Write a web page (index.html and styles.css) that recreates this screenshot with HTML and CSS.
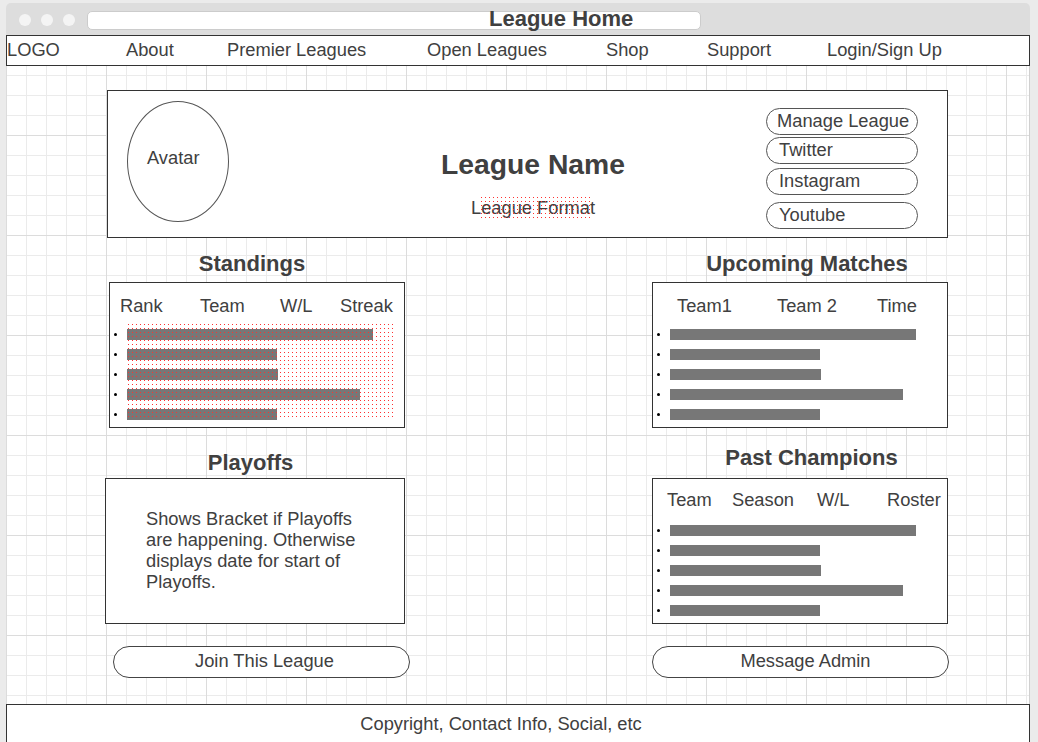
FILE: index.html
```html
<!DOCTYPE html>
<html lang="en">
<head>
<meta charset="utf-8">
<title>League Home</title>
<link rel="stylesheet" href="styles.css">
</head>
<body>
<div class="window">
  <div class="titlebar">
    <div class="dots"><span class="dot"></span><span class="dot"></span><span class="dot"></span></div>
    <div class="addr"></div>
    <div class="win-title">League Home</div>
  </div>
  <nav class="nav">
    <span class="nav-item w-logo">LOGO</span>
    <span class="nav-item w-about">About</span>
    <span class="nav-item w-premier">Premier Leagues</span>
    <span class="nav-item w-open">Open Leagues</span>
    <span class="nav-item w-shop">Shop</span>
    <span class="nav-item w-support">Support</span>
    <span class="nav-item">Login/Sign Up</span>
  </nav>
  <main class="canvas">
    <section class="hero">
      <div class="avatar">Avatar</div>
      <div class="hero-center">
        <div class="league-name">League Name</div>
        <div class="league-format">League Format</div>
      </div>
      <div class="hero-links">
        <div class="pill pill-first">Manage League</div>
        <div class="pill pill-2">Twitter</div>
        <div class="pill pill-3">Instagram</div>
        <div class="pill pill-4">Youtube</div>
      </div>
    </section>
    <div class="columns">
      <div class="col col-left">
        <h2 class="sec-title t-standings">Standings</h2>
        <div class="box box-standings">
          <div class="thead th-standings">
            <span class="c80">Rank</span><span class="c80">Team</span><span class="c60">W/L</span><span>Streak</span>
          </div>
          <ul class="rows rows-top">
            <li class="row"><span class="bullet"></span><span class="bar" style="width:246px"></span></li>
            <li class="row"><span class="bullet"></span><span class="bar" style="width:150px"></span></li>
            <li class="row"><span class="bullet"></span><span class="bar" style="width:151px"></span></li>
            <li class="row"><span class="bullet"></span><span class="bar" style="width:233px"></span></li>
            <li class="row"><span class="bullet"></span><span class="bar" style="width:150px"></span></li>
          </ul>
          <div class="dotted-overlay"></div>
        </div>
        <h2 class="sec-title t-playoffs">Playoffs</h2>
        <div class="box box-playoffs">
          <p class="playoffs-text">Shows Bracket if Playoffs are happening. Otherwise displays date for start of Playoffs.</p>
        </div>
        <div class="btn btn-join">Join This League</div>
      </div>
      <div class="col col-right">
        <h2 class="sec-title t-upcoming">Upcoming Matches</h2>
        <div class="box box-upcoming">
          <div class="thead th-upcoming">
            <span class="c100">Team1</span><span class="c100">Team 2</span><span>Time</span>
          </div>
          <ul class="rows rows-top">
            <li class="row"><span class="bullet"></span><span class="bar" style="width:246px"></span></li>
            <li class="row"><span class="bullet"></span><span class="bar" style="width:150px"></span></li>
            <li class="row"><span class="bullet"></span><span class="bar" style="width:151px"></span></li>
            <li class="row"><span class="bullet"></span><span class="bar" style="width:233px"></span></li>
            <li class="row"><span class="bullet"></span><span class="bar" style="width:150px"></span></li>
          </ul>
        </div>
        <h2 class="sec-title t-champions">Past Champions</h2>
        <div class="box box-champions">
          <div class="thead th-champions">
            <span class="c65">Team</span><span class="c85">Season</span><span class="c70">W/L</span><span>Roster</span>
          </div>
          <ul class="rows rows-champ">
            <li class="row"><span class="bullet"></span><span class="bar" style="width:246px"></span></li>
            <li class="row"><span class="bullet"></span><span class="bar" style="width:150px"></span></li>
            <li class="row"><span class="bullet"></span><span class="bar" style="width:151px"></span></li>
            <li class="row"><span class="bullet"></span><span class="bar" style="width:233px"></span></li>
            <li class="row"><span class="bullet"></span><span class="bar" style="width:150px"></span></li>
          </ul>
        </div>
        <div class="btn btn-admin">Message Admin</div>
      </div>
    </div>
  </main>
  <footer class="footer">Copyright, Contact Info, Social, etc</footer>
</div>
</body>
</html>
```

FILE: styles.css
```css
* { box-sizing: border-box; }

html, body {
  margin: 0;
  padding: 0;
  height: 742px;
  overflow: hidden;
}

body {
  background: #ebebeb;
  font-family: "Liberation Sans", Arial, sans-serif;
  font-size: 18.3px;
  color: #404040;
  padding-top: 3px;
}

.window {
  margin-left: 6px;
  width: 1024px;
}

/* Title bar */
.titlebar {
  position: relative;
  height: 32px;
  padding-top: 2px;
  background: #dddddd;
  border-radius: 5px 5px 0 0;
  display: flex;
  align-items: center;
}

.dots {
  display: flex;
  gap: 10px;
  padding-left: 13px;
}

.dot {
  width: 12px;
  height: 12px;
  border-radius: 50%;
  background: #f4f4f4;
}

.addr {
  margin-left: 12px;
  width: 614px;
  height: 19px;
  background: #fff;
  border: 1px solid #cccccc;
  border-radius: 5px;
}

.win-title {
  position: absolute;
  left: 483px;
  top: 3px;
  font-size: 22px;
  line-height: 26px;
  font-weight: bold;
}

/* Nav */
.nav {
  height: 31px;
  border: 1px solid #333;
  background: #fff;
  display: flex;
  padding-top: 1px;
  line-height: 25px;
}

.nav-item { white-space: nowrap; }
.w-logo { width: 119px; }
.w-about { width: 101px; }
.w-premier { width: 200px; }
.w-open { width: 179px; }
.w-shop { width: 101px; }
.w-support { width: 120px; }

/* Canvas */
.canvas {
  height: 638px;
  padding-top: 24px;
  border-right: 1px solid #d0d0d0;
  background-color: #fff;
  background-image:
    linear-gradient(to right, #dcdcdc 1px, transparent 1px),
    linear-gradient(to bottom, #dcdcdc 1px, transparent 1px),
    linear-gradient(to right, #ebebeb 1px, transparent 1px),
    linear-gradient(to bottom, #ebebeb 1px, transparent 1px);
  background-size: 100px 100px, 100px 100px, 20px 20px, 20px 20px;
  background-position: 0 69px, 0 69px, 0 9px, 0 9px;
}

/* Hero */
.hero {
  margin-left: 101px;
  width: 841px;
  height: 148px;
  border: 1px solid #333;
  background: #fff;
  display: flex;
  align-items: flex-start;
}

.avatar {
  margin-left: 19px;
  margin-top: 10px;
  width: 102px;
  height: 121px;
  border: 1px solid #555;
  border-radius: 50%;
  display: flex;
  align-items: center;
  padding-left: 19px;
  padding-bottom: 9px;
  line-height: 21px;
}

.hero-center {
  margin-left: 71px;
  margin-top: 57px;
  width: 466px;
  text-align: center;
}

.league-name {
  font-size: 28.3px;
  line-height: 32px;
  font-weight: bold;
}

.league-format {
  position: relative;
  display: inline-block;
  margin-top: 16px;
  line-height: 24px;
}

.league-format::after {
  content: "";
  position: absolute;
  left: 9px;
  right: 5px;
  top: 0;
  bottom: 0;
  background-image: radial-gradient(circle at 1.5px 1.5px, #ff3030 0.6px, transparent 0.9px);
  background-size: 4px 4px;
}

.hero-links {
  width: 152px;
  margin-top: 17px;
}

.pill {
  height: 27px;
  border: 1px solid #555;
  border-radius: 14px;
  padding-left: 12px;
  line-height: 23px;
  white-space: nowrap;
}

.pill-first { padding-left: 10px; }
.pill-2 { margin-top: 2px; }
.pill-3 { margin-top: 4px; }
.pill-4 { margin-top: 7px; }

/* Columns */
.columns {
  display: flex;
  margin-left: 99px;
}

.col-left { width: 305px; }
.col-right { width: 297px; margin-left: 242px; }

.sec-title {
  margin: 0;
  height: 26px;
  font-size: 22px;
  line-height: 28px;
  font-weight: bold;
  text-align: center;
  white-space: nowrap;
}

.t-standings { margin-top: 12px; padding-right: 11px; }
.t-playoffs { margin-top: 21px; padding-right: 14px; }
.t-upcoming { margin-top: 12px; padding-left: 13px; }
.t-champions { margin-top: 16px; padding-left: 22px; }

.box {
  position: relative;
  width: 296px;
  height: 146px;
  border: 1px solid #333;
  background: #fff;
}

.box-standings { margin-left: 4px; margin-top: 6px; }
.box-upcoming { margin-top: 6px; }
.box-champions { margin-top: 8px; }
.box-playoffs { width: 300px; margin-top: 3px; }

.thead {
  display: flex;
  line-height: 21px;
  white-space: nowrap;
}

.th-standings { padding: 12px 0 0 10px; }
.th-upcoming { padding: 12px 0 0 24px; }
.th-champions { padding: 10px 0 0 14px; }

.c60 { width: 60px; }
.c65 { width: 65px; }
.c70 { width: 70px; }
.c80 { width: 80px; }
.c85 { width: 85px; }
.c100 { width: 100px; }

.rows {
  list-style: none;
  margin: 0;
  padding: 0;
}

.rows-top { margin-top: 8px; }
.rows-champ { margin-top: 10px; }

.row {
  height: 20px;
  display: flex;
  align-items: center;
}

.bullet {
  width: 3px;
  height: 3px;
  margin-left: 4px;
  margin-right: 10px;
  border-radius: 50%;
  background: #000;
}

.bar {
  height: 11px;
  background: #777;
}

.dotted-overlay {
  position: absolute;
  left: 17px;
  top: 40px;
  width: 268px;
  height: 96px;
  background-image: radial-gradient(circle at 1.5px 1.5px, #ff3030 0.6px, transparent 0.9px);
  background-size: 4px 4px;
  pointer-events: none;
}

.playoffs-text {
  margin: 0;
  padding: 29px 0 0 40px;
  width: 264px;
  line-height: 21px;
}

/* Buttons */
.btn {
  width: 297px;
  height: 32px;
  margin-top: 22px;
  border: 1px solid #444;
  border-radius: 16px;
  background: #fff;
  text-align: center;
  line-height: 28px;
}

.btn-join { margin-left: 8px; padding-left: 6px; }
.btn-admin { padding-left: 10px; }

/* Footer */
.footer {
  height: 38px;
  border: 1px solid #333;
  border-bottom: none;
  background: #fff;
  padding-top: 7px;
  padding-right: 34px;
  text-align: center;
  line-height: 24px;
}
```
